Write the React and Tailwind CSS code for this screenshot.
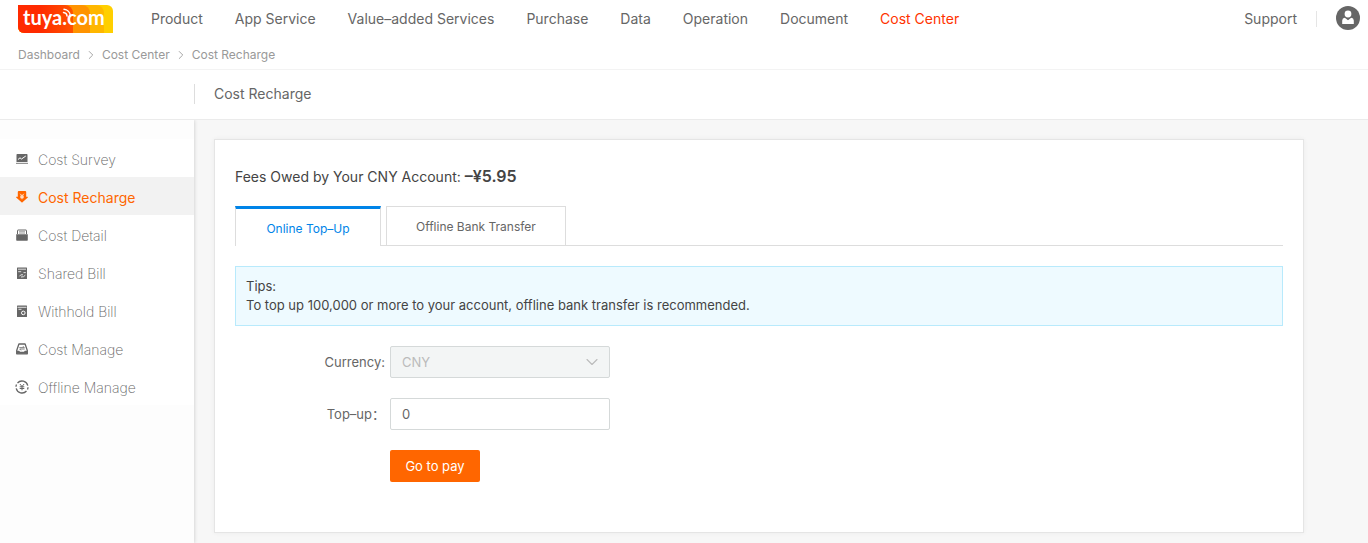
import { ChevronDown, ChevronRight } from 'lucide-react'
import clsx from 'clsx'

const topNav = ['Product', 'App Service', 'Value–added Services', 'Purchase', 'Data', 'Operation', 'Document', 'Cost Center']

const sideNav = [
  { label: 'Cost Survey', icon: SurveyIcon },
  { label: 'Cost Recharge', icon: RechargeIcon, active: true },
  { label: 'Cost Detail', icon: DetailIcon },
  { label: 'Shared Bill', icon: SharedIcon },
  { label: 'Withhold Bill', icon: WithholdIcon },
  { label: 'Cost Manage', icon: ManageIcon },
  { label: 'Offline Manage', icon: OfflineIcon },
]

function SurveyIcon() {
  return (
    <svg viewBox="0 0 14 14" className="w-3.5 h-3.5" fill="currentColor">
      <path d="M2.300 1h9.400a.8.8 0 0 1 .8.8V9h-11V1.800a.8.8 0 0 1 .8-.8z" />
      <path d="M1 9.800h12V11H1z" opacity=".7" />
      <path d="M3 6.500l2-1.700 1.500 1.200L10.800 3" fill="none" stroke="#fff" strokeWidth="1" />
    </svg>
  )
}

function RechargeIcon() {
  return (
    <svg viewBox="0 0 14 14" className="w-3.5 h-3.5" fill="currentColor">
      <path d="M3.800 0h6.400a1 1 0 0 1 1 1v4.700h1.300a.4.400 0 0 1 .3.700L7.500 11.300a.8.8 0 0 1-1 0L1.200 6.400a.4.400 0 0 1 .3-.7h1.300V1a1 1 0 0 1 1-1z" />
      <path d="M5.200 2.800L7 4.800l1.800-2M5 5.200h4M5.200 6.700h3.600M7 4.800v3.400" fill="none" stroke="#fff" strokeWidth=".8" />
    </svg>
  )
}

function DetailIcon() {
  return (
    <svg viewBox="0 0 14 14" className="w-3.5 h-3.5" fill="currentColor">
      <path d="M2.500 5V1.500a.5.500 0 0 1 .5-.5h8a.5.500 0 0 1 .5.500V5" fill="none" stroke="currentColor" />
      <path d="M4 2.700h6M4 4.100h6" stroke="currentColor" strokeWidth=".6" />
      <path d="M1.200 5.200h11.600v5.800a.7.700 0 0 1-.7.700H1.900a.7.700 0 0 1-.7-.7z" />
    </svg>
  )
}

function SharedIcon() {
  return (
    <svg viewBox="0 0 14 14" className="w-3.5 h-3.5" fill="currentColor">
      <path d="M2.500.5h9a.5.500 0 0 1 .5.500v10.500a.5.500 0 0 1-.5.500h-9a.5.500 0 0 1-.5-.5V1a.5.500 0 0 1 .5-.5z" />
      <path d="M3 2.200h8M3.200 4.700h3M8.500 5.600h2.300M4.500 9.300l1.300-1.500H8M6 10l2.500-.3 1.800-1.500" fill="none" stroke="#fff" strokeWidth=".8" />
    </svg>
  )
}

function WithholdIcon() {
  return (
    <svg viewBox="0 0 14 14" className="w-3.5 h-3.5" fill="currentColor">
      <path d="M2.500.5h9a.5.500 0 0 1 .5.500v10.500a.5.500 0 0 1-.5.500h-9a.5.500 0 0 1-.5-.5V1a.5.500 0 0 1 .5-.5z" />
      <path d="M2.500 2.300h9M3.500 4.300h3" stroke="#fff" strokeWidth=".8" />
      <circle cx="8.300" cy="7.900" r="1.800" fill="none" stroke="#fff" strokeWidth="1" />
    </svg>
  )
}

function ManageIcon() {
  return (
    <svg viewBox="0 0 14 14" className="w-3.5 h-3.5" fill="currentColor">
      <path d="M3.900 1h6.200l2.200 6.500v3.300H1.700V7.500z" fill="none" stroke="currentColor" strokeWidth="1.300" strokeLinejoin="round" />
      <path d="M1.700 7.800h2.500l.8.900h4l.8-.9h2.500v3H1.700z" />
      <path d="M4.300 4.600h5L8 3.200M9.700 6h-5L6 7.400" fill="none" stroke="currentColor" strokeWidth=".8" />
    </svg>
  )
}

function OfflineIcon() {
  return (
    <svg viewBox="0 0 14 14" className="w-3.5 h-3.5 overflow-visible" fill="none" stroke="currentColor">
      <path d="M2.500 2A6 6 0 0 1 12.800 4.700M11.500 10A6 6 0 0 1 1.200 7.300M1 5.800A6 6 0 0 1 1.500 3.500M13 6.200A6 6 0 0 1 12.500 8.500" strokeWidth="1.300" />
      <path d="M4.900 3L7 5.500 9.100 3M4.700 5.800h4.600M4.700 7.500h4.600M7 5.300v4" strokeWidth="1" />
    </svg>
  )
}

function Logo() {
  return (
    <svg viewBox="0 0 95 28" className="w-[95px] h-7 overflow-visible" role="img" aria-label="tuya.com">
      <defs>
        <linearGradient id="logo-red" x1="0" x2="1">
          <stop offset="0.400" stopColor="#ff2a00" />
          <stop offset="1" stopColor="#ff5200" />
        </linearGradient>
        <clipPath id="logo-clip">
          <path d="M0 0h89a6 6 0 0 1 6 6v22H6a6 6 0 0 1-6-6z" />
        </clipPath>
      </defs>
      <g clipPath="url(#logo-clip)">
        <rect width="95" height="28" fill="#ffcf00" />
        <path d="M0 0h78a8 8 0 0 1 8 8v20H0z" fill="#ffb700" />
        <path d="M0 0h64a8 8 0 0 1 8 8v20H0z" fill="#ff9300" />
        <path d="M0 0h47a8 8 0 0 1 8 8v20H0z" fill="url(#logo-red)" />
      </g>
      <text x="5" y="20" fontFamily="Lato, sans-serif" fontSize="20" fontWeight="700" fill="#fff">tuya.com</text>
      <path d="M45.500 7.500a4 4 0 0 1 3.600 3.600M46 4.300a7 7 0 0 1 6.300 6.300" fill="none" stroke="#fff" strokeWidth="1.400" strokeLinecap="round" />
    </svg>
  )
}

function Avatar() {
  return (
    <svg viewBox="0 0 24 24" className="w-6 h-6">
      <circle cx="12" cy="12" r="12" fill="#666" />
      <circle cx="12" cy="8" r="3.400" fill="#fff" />
      <path d="M6.200 18v-3.500a3 3 0 0 1 2.600-2.800L12 14.200l3.200-2.500a3 3 0 0 1 2.600 2.800V18z" fill="#fff" />
    </svg>
  )
}

function Header() {
  return (
    <header className="bg-white border-b border-[#f3f3f3] shadow-[0_1px_2px_rgba(0,0,0,0.04)]">
      <div className="flex items-center justify-between h-[38px] pl-[18px] pr-2">
        <div className="flex items-center">
          <a href="#home"><Logo /></a>
          <nav className="flex gap-8 ml-[38px] text-sm">
            {topNav.map((item) => (
              <a key={item} href="#nav" className={item === 'Cost Center' ? 'text-[#ff3300]' : ''}>{item}</a>
            ))}
          </nav>
        </div>
        <div className="flex items-center gap-[19px] text-sm">
          <a href="#support">Support</a>
          <span className="w-px h-4 bg-[#e5e5e5]" />
          <button type="button" aria-label="Account" className="pb-0.5"><Avatar /></button>
        </div>
      </div>
      <nav aria-label="Breadcrumb" className="flex items-center gap-1 h-[31px] pt-0.5 pl-[18px] text-xs text-[#999]">
        <a href="#dashboard">Dashboard</a>
        <ChevronRight className="w-3.5 h-3.5" strokeWidth={1.5} />
        <a href="#cost">Cost Center</a>
        <ChevronRight className="w-3.5 h-3.5" strokeWidth={1.5} />
        <span>Cost Recharge</span>
      </nav>
    </header>
  )
}

function Sidebar() {
  return (
    <aside className="w-[194px] shrink-0 bg-[#fdfdfd] pt-[19px] shadow-[0_0_4px_rgba(0,0,0,0.2)]">
      <nav className="bg-white text-sm">
        {sideNav.map(({ label, icon: Icon, active }) => (
          <a
            key={label}
            href="#side"
            className={clsx('flex items-center gap-[9px] h-[38px] pt-1 pl-[15px]', active ? 'bg-[#f2f2f2] text-[#ff6600]' : 'font-extralight')}
          >
            <Icon />
            {label}
          </a>
        ))}
      </nav>
    </aside>
  )
}

function TopUpForm() {
  return (
    <form className="grid grid-cols-[150px_220px] gap-x-[5px] gap-y-5 mt-5 text-[13px]">
      <label htmlFor="currency" className="self-center justify-self-end pt-0.5">Currency:</label>
      <div className="relative">
        <select
          id="currency"
          disabled
          className="appearance-none w-full h-8 px-[11px] pt-0.5 rounded-xs border border-[#d5d9d9] bg-[#f3f5f5] text-[#bbb] opacity-100"
        >
          <option>CNY</option>
        </select>
        <ChevronDown className="absolute right-2 top-1.5 w-5 h-5 text-[#bbb] pointer-events-none" strokeWidth={1.3} />
      </div>
      <label htmlFor="amount" className="self-center justify-self-end pt-0.5">Top–up：</label>
      <input id="amount" type="text" defaultValue="0" className="w-full h-8 px-[11px] rounded-xs border border-[#d5d9d9] bg-white" />
      <button type="button" className="col-start-2 justify-self-start w-[90px] h-8 pt-0.5 rounded-xs bg-[#ff6600] text-white">
        Go to pay
      </button>
    </form>
  )
}

export default function App() {
  return (
    <div className="min-h-screen flex flex-col bg-[#f7f7f7] text-[#666] font-['Inter','Noto_Sans_CJK_SC',sans-serif]">
      <Header />
      <div className="relative flex items-center h-[50px] pb-0.5 bg-white border-b border-[#ebebeb]">
        <h1 className="ml-[194px] pl-[19px] border-l border-[#ddd] text-sm">Cost Recharge</h1>
      </div>
      <div className="flex flex-1">
        <Sidebar />
        <main className="flex-1 pl-5 pr-16 pt-[19px] pb-2.5">
          <section className="h-full bg-white border border-[#e5e5e5] shadow-[0_0_5px_rgba(0,0,0,0.05)] px-5 pt-6 pb-[50px]">
            <p className="text-sm leading-6 text-[#444]">
              Fees Owed by Your CNY Account: <strong className="text-base leading-6 font-semibold">–¥5.95</strong>
            </p>
            <div role="tablist" className="flex gap-[5px] mt-[17px] border-b border-[#ddd] text-xs">
              <button type="button" role="tab" aria-selected="true" className="min-w-[146px] h-10 -mb-px px-[29px] pt-0.5 border-x border-[#ddd] border-t-3 border-t-[#0084e8] bg-white text-[#0084e8]">
                Online Top–Up
              </button>
              <button type="button" role="tab" aria-selected="false" className="h-[39px] px-[29px] pt-0.5 border border-b-0 border-[#ddd]">
                Offline Bank Transfer
              </button>
            </div>
            <div className="mt-5 px-2.5 py-2.5 border border-[#b8eafc] bg-[#eefaff] text-[13px] leading-[19px] text-[#444]">
              <p>Tips:</p>
              <p>To top up 100,000 or more to your account, offline bank transfer is recommended.</p>
            </div>
            <TopUpForm />
          </section>
        </main>
      </div>
    </div>
  )
}
